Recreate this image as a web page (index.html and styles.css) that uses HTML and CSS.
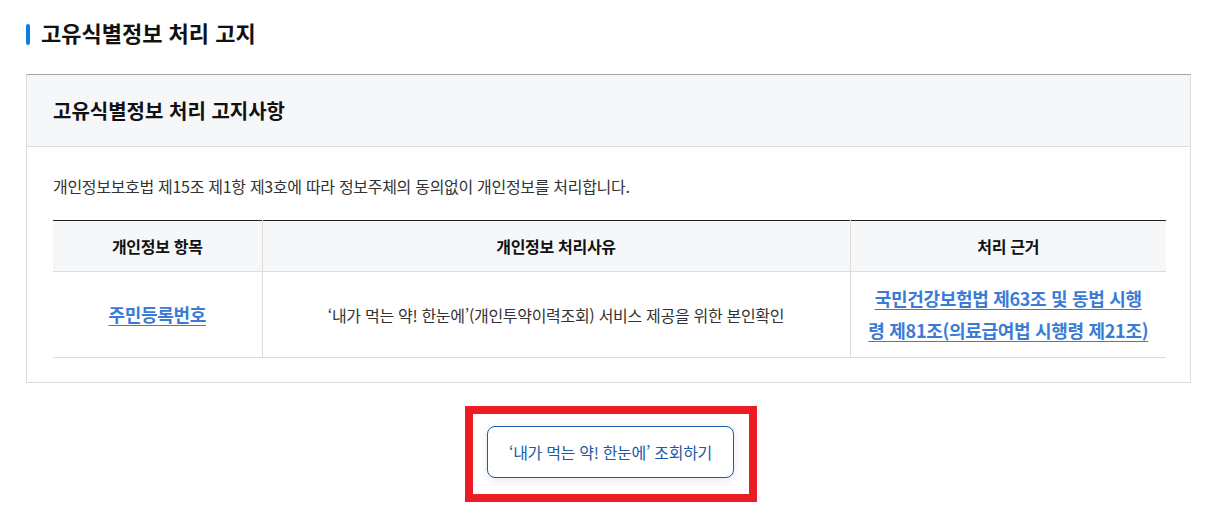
FILE: index.html
```html
<!DOCTYPE html>
<html lang="ko">
<head>
    <meta charset="UTF-8">
    <meta name="viewport" content="width=device-width, initial-scale=1.0">
    <title>고유식별정보 처리 고지</title>
    <link rel="stylesheet" href="styles.css">
</head>
<body>
    <div class="wrap">
        <h2 class="tit">고유식별정보 처리 고지</h2>

        <div class="notice">
            <div class="notice-head">
                <h3>고유식별정보 처리 고지사항</h3>
            </div>
            <div class="notice-body">
                <p class="desc">개인정보보호법 제15조 제1항 제3호에 따라 정보주체의 동의없이 개인정보를 처리합니다.</p>
                <table class="tbl">
                    <colgroup>
                        <col class="c1">
                        <col class="c2">
                        <col class="c3">
                    </colgroup>
                    <thead>
                        <tr>
                            <th>개인정보 항목</th>
                            <th>개인정보 처리사유</th>
                            <th>처리 근거</th>
                        </tr>
                    </thead>
                    <tbody>
                        <tr>
                            <td><a href="#" class="lnk">주민등록번호</a></td>
                            <td>‘내가 먹는 약! 한눈에’(개인투약이력조회) 서비스 제공을 위한 본인확인</td>
                            <td><a href="#" class="lnk lnk-basis">국민건강보험법 제63조 및 동법 시행령 제81조(의료급여법 시행령 제21조)</a></td>
                        </tr>
                    </tbody>
                </table>
            </div>
        </div>

        <div class="btn-area">
            <div class="mark">
                <button type="button" class="btn">‘내가 먹는 약! 한눈에’ 조회하기</button>
            </div>
        </div>
    </div>
</body>
</html>
```

FILE: styles.css
```css
:root {
    --blue: #0b7fe0;
    --link: #3a7bd5;
    --line: #dcdcdc;
    --head-bg: #f6f7f9;
}
* {
    box-sizing: border-box;
}
body {
    margin: 0;
    background: #fff;
    color: #222;
    font-family: "Noto Sans CJK KR", "Noto Sans", sans-serif;
}
.wrap {
    padding: 17px 20px 0 26px;
}
.tit {
    position: relative;
    margin: 0;
    padding-left: 15px;
    font-size: 22px;
    line-height: 30px;
    font-weight: 700;
    color: #111;
}
.tit::before {
    content: "";
    position: absolute;
    left: 0;
    top: 7px;
    width: 4px;
    height: 21px;
    border-radius: 2px;
    background: var(--blue);
}
.notice {
    margin-top: 27px;
    border: 1px solid var(--line);
    border-top-color: #a6a6a6;
}
.notice-head {
    height: 72px;
    padding: 0 26px;
    display: flex;
    align-items: center;
    background: var(--head-bg);
    border-bottom: 1px solid var(--line);
}
.notice-head h3 {
    margin: 0;
    font-size: 20px;
    font-weight: 700;
    color: #111;
}
.notice-body {
    padding: 27px 24px 24px 26px;
}
.desc {
    margin: 0 0 22px;
    font-size: 16px;
    line-height: 24px;
    letter-spacing: -0.3px;
    color: #333;
}
.tbl {
    width: 100%;
    border-collapse: collapse;
    border-top: 1px solid #222;
    font-size: 16px;
    letter-spacing: -0.3px;
}
.c1 { width: 209px; }
.c3 { width: 316px; }
.tbl th {
    height: 51px;
    background: var(--head-bg);
    font-weight: 700;
    color: #111;
    border-bottom: 1px solid var(--line);
    border-left: 1px solid var(--line);
}
.tbl td {
    height: 86px;
    padding: 0 10px;
    text-align: center;
    color: #333;
    line-height: 32px;
    border-bottom: 1px solid var(--line);
    border-left: 1px solid var(--line);
}
.tbl th:first-child,
.tbl td:first-child {
    border-left: 0;
}
.lnk {
    color: var(--link);
    font-weight: 700;
    font-size: 18px;
    text-decoration: underline;
    text-underline-offset: 3px;
}
.lnk-basis {
    display: inline-block;
    max-width: 282px;
}
.btn-area {
    display: flex;
    justify-content: center;
    padding: 23px 0 0 5px;
}
.mark {
    border: 8px solid #ed1c24;
    padding: 12px 15px 16px 14px;
}
.btn {
    width: 247px;
    height: 52px;
    border: 1px solid #1a5ba8;
    border-radius: 8px;
    background: #fff;
    color: #1a5ba8;
    font-family: inherit;
    font-size: 16px;
    letter-spacing: -0.3px;
    box-shadow: 0 2px 8px rgba(0, 0, 0, 0.1);
    cursor: pointer;
}
```
